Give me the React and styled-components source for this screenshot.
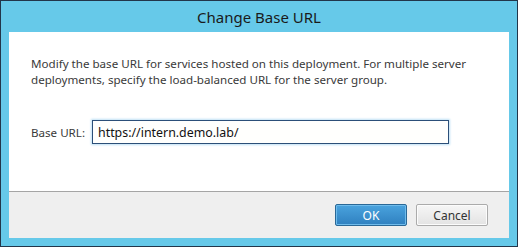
import React from 'react';
import styled, { createGlobalStyle } from 'styled-components';

const GlobalStyle = createGlobalStyle`
  html, body {
    margin: 0;
    padding: 0;
    background: #ffffff;
  }
  * {
    box-sizing: border-box;
  }
`;

const Window = styled.div`
  width: 518px;
  height: 247px;
  border: 1px solid #22364a;
  background-color: #66c9e9;
  display: flex;
  flex-direction: column;
  padding: 0 8px 8px 8px;
  font-family: "Noto Sans", "Open Sans", sans-serif;
`;

const TitleBar = styled.div`
  height: 31px;
  display: flex;
  align-items: center;
  justify-content: center;
  font-size: 15px;
  color: #1a1a1a;
  padding-top: 1px;
`;

const Body = styled.div`
  background: #ffffff;
  height: 159px;
  padding: 24px 22px 0 22px;
`;

const Message = styled.p`
  margin: 0;
  font-size: 11.6px;
  line-height: 16px;
  color: #3a3a3a;
`;

const FieldRow = styled.div`
  display: flex;
  align-items: center;
  margin-top: 32px;
`;

const Label = styled.label`
  font-size: 11.6px;
  color: #3a3a3a;
  width: 61px;
  flex-shrink: 0;
  white-space: nowrap;
`;

const TextInput = styled.input`
  width: 357px;
  height: 24px;
  border: 1px solid #2c4f78;
  box-shadow: 0 0 2px 1px #bfe1f5;
  padding: 0 5px;
  font-family: "Noto Sans", "Open Sans", sans-serif;
  font-size: 12.4px;
  color: #111111;
  background: #fffffd;
  outline: none;
`;

const Footer = styled.div`
  flex: 1;
  background: #efefef;
  border-top: 1px solid #a5a5a5;
  display: flex;
  justify-content: flex-end;
  align-items: flex-start;
  padding: 12px 21px 0 0;
  gap: 9px;
`;

const Button = styled.button`
  width: 72px;
  height: 22px;
  font-family: "Noto Sans", "Open Sans", sans-serif;
  font-size: 12px;
  padding: 0;
  border-radius: 2px;
  color: ${p => (p.$primary ? '#ffffff' : '#333333')};
  border: 1px solid ${p => (p.$primary ? '#2a6896' : '#ababab')};
  background: ${p =>
    p.$primary
      ? 'linear-gradient(#4aa3de, #2f80c0)'
      : 'linear-gradient(#f6f6f6, #e3e3e3)'};
  box-shadow: ${p => (p.$primary ? 'inset 0 0 0 1px #6fbbeb' : 'inset 0 0 0 1px #fcfcfc')};
`;

export default function App() {
  return (
    <>
      <GlobalStyle />
      <Window>
        <TitleBar>Change Base URL</TitleBar>
        <Body>
          <Message>
            Modify the base URL for services hosted on this deployment. For multiple server
            <br />
            deployments, specify the load-balanced URL for the server group.
          </Message>
          <FieldRow>
            <Label>Base URL:</Label>
            <TextInput defaultValue="https://intern.demo.lab/" />
          </FieldRow>
        </Body>
        <Footer>
          <Button $primary>OK</Button>
          <Button>Cancel</Button>
        </Footer>
      </Window>
    </>
  );
}
